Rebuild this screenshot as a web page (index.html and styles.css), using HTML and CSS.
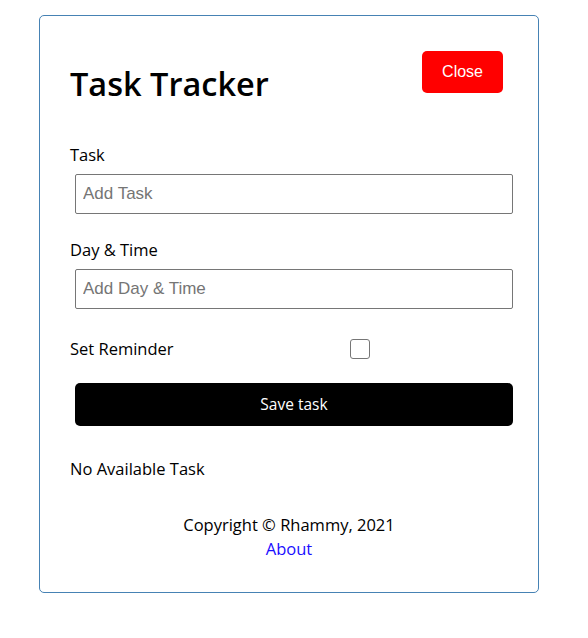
FILE: index.html
```html
<!DOCTYPE html>
<html lang="en">
<head>
<meta charset="utf-8">
<title>Task Tracker</title>
<link rel="stylesheet" href="styles.css">
</head>
<body>
<div class="container">
  <header class="header">
    <h1 class="title">Task Tracker</h1>
    <button class="btn btn-close" type="button">Close</button>
  </header>
  <form class="add-form">
    <div class="form-control">
      <label class="field-label">Task</label>
      <input class="text-input" type="text" placeholder="Add Task">
    </div>
    <div class="form-control">
      <label class="field-label">Day &amp; Time</label>
      <input class="text-input" type="text" placeholder="Add Day &amp; Time">
    </div>
    <div class="form-control form-control-check">
      <label class="check-label">Set Reminder</label>
      <div class="check-wrap"><input class="check-input" type="checkbox"></div>
    </div>
    <button class="btn btn-block" type="button">Save task</button>
  </form>
  <div class="empty">No Available Task</div>
  <footer class="footer">
    <p class="copyright">Copyright &copy; Rhammy, 2021</p>
    <a class="about-link" href="#">About</a>
  </footer>
</div>
</body>
</html>
```

FILE: styles.css
```css
* {
  box-sizing: border-box;
}

body {
  margin: 0;
  padding: 15px 10px 0 0;
  font-family: "Open Sans", "Noto Sans", sans-serif;
  font-size: 16.5px;
  line-height: 24px;
  color: #000;
  background: #fff;
}

.container {
  width: 500px;
  margin: 0 auto;
  border: 1px solid steelblue;
  border-radius: 5px;
  padding: 30px 30px 31px;
}

.header {
  display: flex;
  justify-content: space-between;
  align-items: flex-start;
}

.title {
  margin: 18px 0 19px;
  font-size: 32.5px;
  line-height: 40px;
  font-weight: 600;
}

.btn {
  display: inline-block;
  border: none;
  border-radius: 5px;
  cursor: pointer;
  margin: 5px;
  padding: 10px 20px;
  color: #fff;
}

.btn-close {
  background: #ff0000;
  font-family: "Liberation Sans", Arial, sans-serif;
  font-size: 16px;
  line-height: 22px;
}

.btn-block {
  display: block;
  width: 100%;
  background: #000;
  font-family: "Open Sans", "Noto Sans", sans-serif;
  font-size: 15.5px;
  line-height: 22.5px;
  font-weight: 500;
}

.add-form {
  margin: 0 0 31px;
}

.form-control {
  display: flow-root;
  margin: 19.5px 0;
}

.field-label {
  display: block;
}

.text-input {
  display: block;
  width: 100%;
  height: 40px;
  margin: 7px 5px 5px;
  padding: 3px 7px;
  border: 1px solid #767676;
  border-radius: 2px;
  font-family: "Liberation Sans", Arial, sans-serif;
  font-size: 17px;
  color: #000;
  background: #fff;
}

.text-input::placeholder {
  color: #757575;
}

.form-control-check {
  display: flex;
  align-items: center;
}

.check-label {
  flex: 1;
}

.check-wrap {
  flex: 2;
  display: flex;
  justify-content: center;
  margin: 5px;
}

.check-input {
  appearance: none;
  -webkit-appearance: none;
  width: 20px;
  height: 20px;
  margin: 0;
  border: 1px solid #767676;
  border-radius: 3px;
  background: #fff;
}

.empty {
  margin: 0;
}

.footer {
  margin-top: 32px;
  text-align: center;
}

.copyright {
  margin: 0;
}

.about-link {
  color: #1a0dff;
  text-decoration: none;
}
```
